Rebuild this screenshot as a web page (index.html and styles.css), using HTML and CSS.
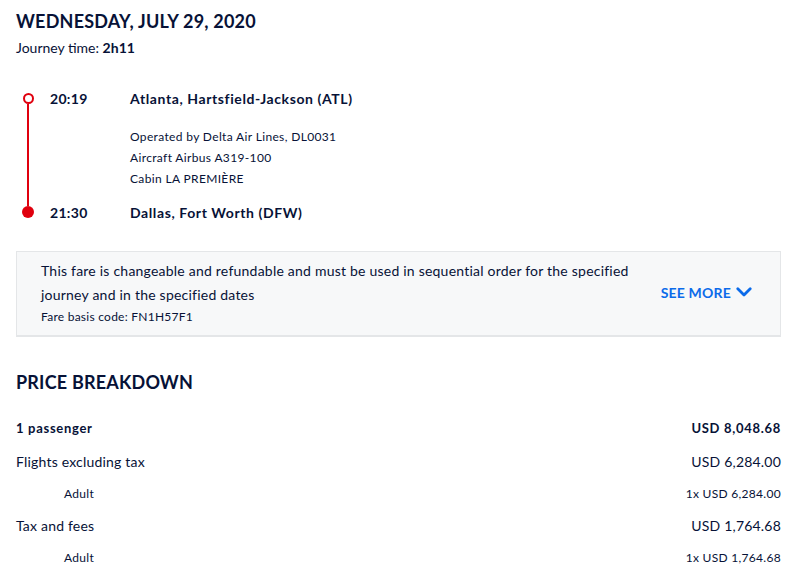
FILE: index.html
```html
<!DOCTYPE html>
<html lang="en">
<head>
<meta charset="utf-8">
<title>Flight details</title>
<link rel="stylesheet" href="styles.css">
</head>
<body>
<main class="page">
  <h1 class="date">WEDNESDAY, JULY 29, 2020</h1>
  <p class="journey">Journey time: <strong>2h11</strong></p>

  <section class="segment">
    <div class="rail">
      <span class="dot dot-open"></span>
      <span class="line"></span>
      <span class="dot dot-fill"></span>
    </div>
    <div class="stops">
      <div class="stop">
        <span class="time">20:19</span>
        <span class="place">Atlanta, Hartsfield-Jackson (ATL)</span>
      </div>
      <div class="details">
        <p>Operated by Delta Air Lines, DL0031</p>
        <p>Aircraft Airbus A319-100</p>
        <p>Cabin LA PREMIÈRE</p>
      </div>
      <div class="stop stop-last">
        <span class="time">21:30</span>
        <span class="place">Dallas, Fort Worth (DFW)</span>
      </div>
    </div>
  </section>

  <section class="fare">
    <div class="fare-text">
      <p class="fare-desc">This fare is changeable and refundable and must be used in sequential order for the specified journey and in the specified dates</p>
      <p class="fare-code">Fare basis code: FN1H57F1</p>
    </div>
    <a class="see-more" href="#">SEE MORE
      <svg width="16" height="12" viewBox="0 0 16 12" aria-hidden="true"><path d="M1.8 2.8 L8 9 L14.2 2.8" fill="none" stroke="currentColor" stroke-width="2.8" stroke-linecap="round" stroke-linejoin="round"/></svg>
    </a>
  </section>

  <h2 class="date price-title">PRICE BREAKDOWN</h2>
  <div class="prices">
    <div class="row row-total"><span>1 passenger</span><span>USD 8,048.68</span></div>
    <div class="row"><span>Flights excluding tax</span><span>USD 6,284.00</span></div>
    <div class="row row-sub"><span>Adult</span><span>1x USD 6,284.00</span></div>
    <div class="row"><span>Tax and fees</span><span>USD 1,764.68</span></div>
    <div class="row row-sub"><span>Adult</span><span>1x USD 1,764.68</span></div>
  </div>
</main>
</body>
</html>
```

FILE: styles.css
```css
* { box-sizing: border-box; }
body {
  margin: 0;
  background: #ffffff;
  color: #071237;
  font-family: "Lato", "Liberation Sans", sans-serif;
}
p { margin: 0; }
.page {
  padding: 9px 17px 0 16px;
}
.date {
  margin: 0;
  font-size: 18px;
  line-height: 24px;
  font-weight: 700;
  letter-spacing: 0.2px;
}
.journey {
  margin-top: 4px;
  font-size: 14px;
  line-height: 22px;
}
.journey strong { font-weight: 700; }

.segment {
  display: flex;
  margin-top: 31px;
}
.rail {
  width: 18px;
  margin-left: 3px;
  display: flex;
  flex-direction: column;
  align-items: center;
  padding: 3px 0;
}
.dot {
  width: 11px;
  height: 11px;
  border-radius: 50%;
  flex: none;
}
.dot-open { border: 2px solid #e0000e; background: #fff; }
.dot-fill { background: #e0000e; width: 12px; height: 12px; }
.line {
  flex: 1;
  width: 2px;
  background: #e0000e;
}
.stops { margin-left: 13px; }
.stop {
  display: flex;
  font-size: 14px;
  line-height: 17px;
  font-weight: 700;
  letter-spacing: 0.6px;
}
.time { width: 80px; letter-spacing: 0.3px; }
.details {
  margin: 19px 0 0 80px;
  font-size: 12px;
  line-height: 21px;
  letter-spacing: 0.35px;
}
.stop-last { margin-top: 15px; }

.fare {
  margin-top: 30px;
  display: flex;
  align-items: center;
  justify-content: space-between;
  background: #f7f8f9;
  border: 1px solid #e4e6e8;
  border-bottom-width: 2px;
  padding: 7px 28px 8px 24px;
}
.fare-text { width: 600px; }
.fare-desc {
  font-size: 14px;
  line-height: 24px;
  letter-spacing: 0.22px;
}
.fare-code {
  margin-top: 0;
  font-size: 12px;
  line-height: 20px;
  letter-spacing: 0.25px;
}
.see-more {
  display: flex;
  align-items: center;
  gap: 5px;
  margin-top: -2px;
  color: #0b6bea;
  font-size: 14px;
  font-weight: 700;
  text-decoration: none;
  letter-spacing: 0.2px;
}

.price-title { margin-top: 33px; }
.prices { margin-top: 18px; }
.row {
  display: flex;
  justify-content: space-between;
  height: 32px;
  align-items: center;
  font-size: 14px;
  letter-spacing: 0.2px;
}
.row-total {
  font-size: 13px;
  font-weight: 700;
  letter-spacing: 0.7px;
  margin-bottom: 1px;
}
.row-sub {
  font-size: 12px;
  padding-left: 48px;
  letter-spacing: 0.3px;
}
```
